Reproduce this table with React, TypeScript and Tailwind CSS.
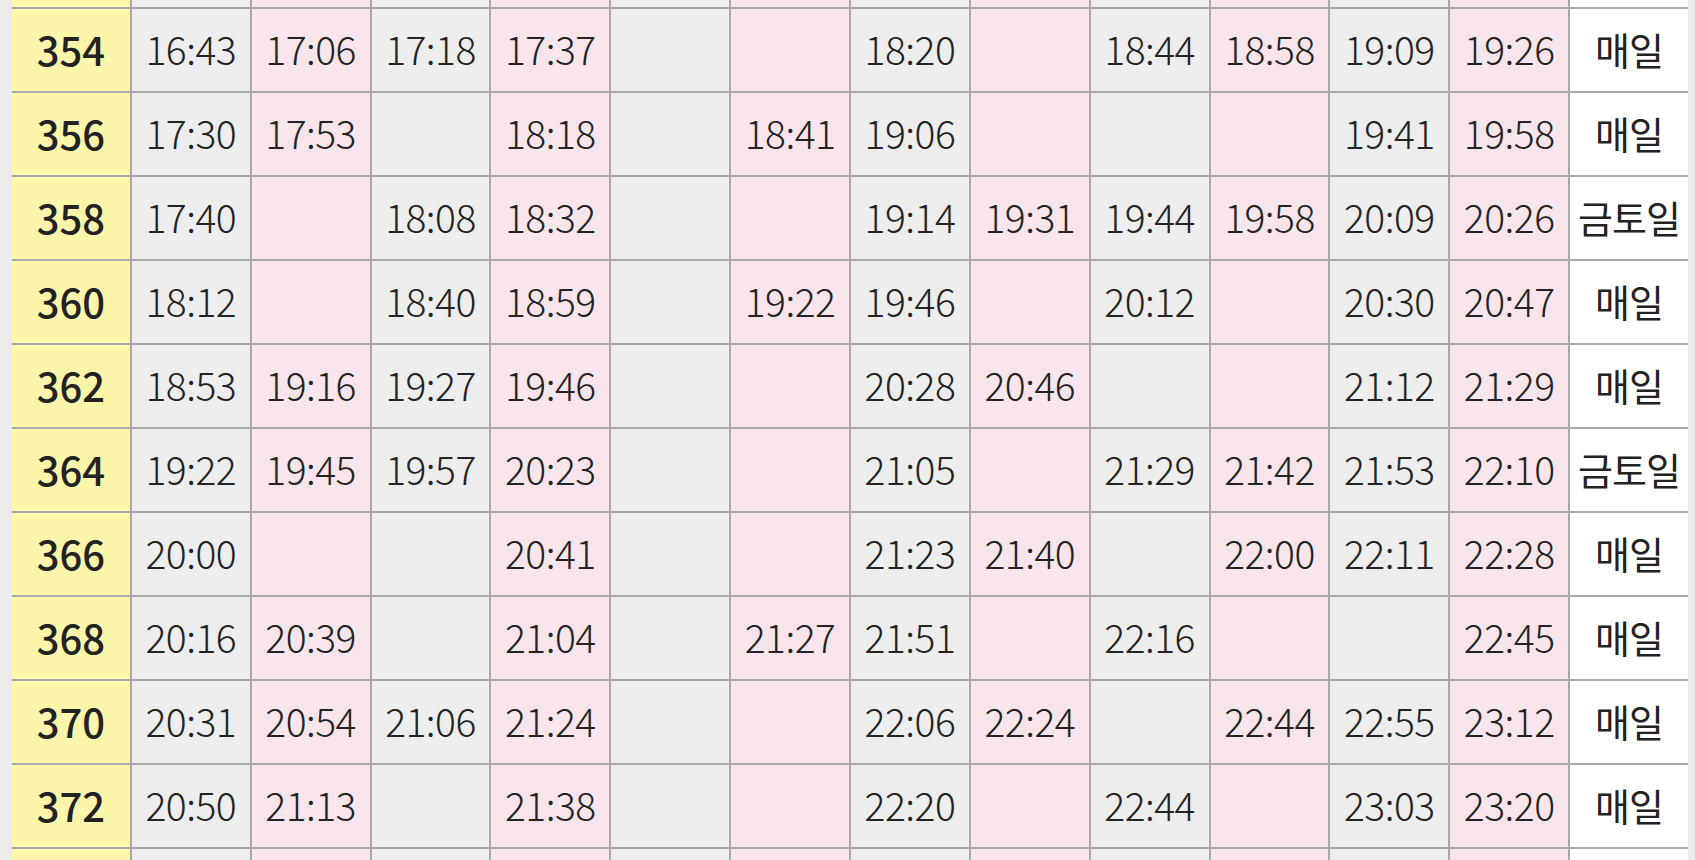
const rows: string[][] = [
  ["", "", "", "", "", "", "", "", "", "", "", "", "", ""],
  ["354", "16:43", "17:06", "17:18", "17:37", "", "", "18:20", "", "18:44", "18:58", "19:09", "19:26", "매일"],
  ["356", "17:30", "17:53", "", "18:18", "", "18:41", "19:06", "", "", "", "19:41", "19:58", "매일"],
  ["358", "17:40", "", "18:08", "18:32", "", "", "19:14", "19:31", "19:44", "19:58", "20:09", "20:26", "금토일"],
  ["360", "18:12", "", "18:40", "18:59", "", "19:22", "19:46", "", "20:12", "", "20:30", "20:47", "매일"],
  ["362", "18:53", "19:16", "19:27", "19:46", "", "", "20:28", "20:46", "", "", "21:12", "21:29", "매일"],
  ["364", "19:22", "19:45", "19:57", "20:23", "", "", "21:05", "", "21:29", "21:42", "21:53", "22:10", "금토일"],
  ["366", "20:00", "", "", "20:41", "", "", "21:23", "21:40", "", "22:00", "22:11", "22:28", "매일"],
  ["368", "20:16", "20:39", "", "21:04", "", "21:27", "21:51", "", "22:16", "", "", "22:45", "매일"],
  ["370", "20:31", "20:54", "21:06", "21:24", "", "", "22:06", "22:24", "", "22:44", "22:55", "23:12", "매일"],
  ["372", "20:50", "21:13", "", "21:38", "", "", "22:20", "", "22:44", "", "23:03", "23:20", "매일"],
  ["", "", "", "", "", "", "", "", "", "", "", "", "", ""],
];

function cellClass(i: number) {
  if (i === 0) return "bg-[#fcf6aa] font-medium text-[40px]";
  if (i === 13) return "bg-white text-[38px] tracking-[-1px]";
  return (i % 2 === 1 ? "bg-[#ededed]" : "bg-[#f8e5ec]") + " font-light text-[39px] tracking-[-0.5px]";
}

export default function App() {
  return (
    <div className="h-[860px] overflow-hidden bg-[#ebebeb] pl-[12px]" style={{ fontFamily: '"Noto Sans CJK KR", "Noto Sans", sans-serif' }}>
      <div className="-mt-[75px] w-[1676px] grid grid-cols-[repeat(14,minmax(0,1fr))] gap-[2px] bg-[#a9a9a9] text-[#222] leading-none">
        {rows.map((r, ri) =>
          r.map((c, i) => (
            <div key={ri + "-" + i} className={"h-[82px] pb-[3px] flex items-center justify-center whitespace-nowrap " + cellClass(i)}>
              {c}
            </div>
          ))
        )}
      </div>
    </div>
  );
}
